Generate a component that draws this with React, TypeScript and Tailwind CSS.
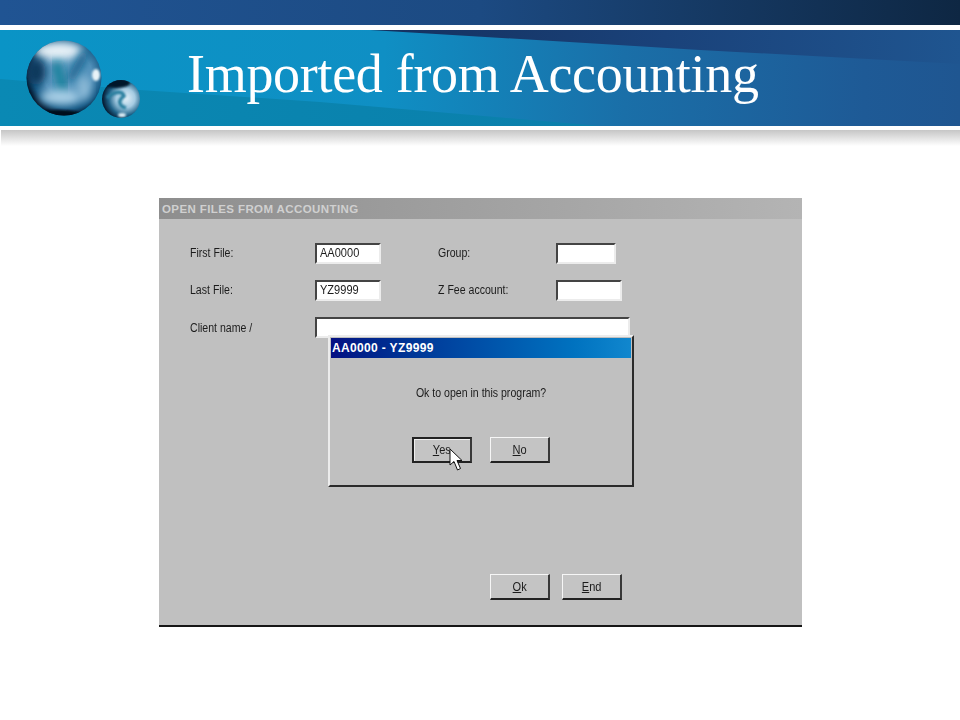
const squeeze = "inline-block whitespace-nowrap origin-left scale-x-[0.88]";

function Field({ width, value }: { width: string; value?: string }) {
  return (
    <div className={`${width} h-[21px] bg-white border-t-2 border-l-2 border-t-[#444444] border-l-[#444444] border-b-2 border-r-2 border-b-[#ececec] border-r-[#ececec] pl-[3px] text-[12px] leading-[17px] text-[#1c1c1c] overflow-hidden`}>
      {value ? <span className="inline-block whitespace-nowrap origin-left scale-x-[0.92]">{value}</span> : null}
    </div>
  );
}

function Label({ className, children }: { className: string; children: string }) {
  return (
    <span className={className}>
      <span className={squeeze}>{children}</span>
    </span>
  );
}

function Btn({ first, rest, strong }: { first: string; rest: string; strong?: boolean }) {
  return (
    <div
      className={`w-[60px] h-[26px] flex items-center justify-center bg-[#c4c4c4] text-[12px] text-[#1c1c1c] border-b-2 border-r-2 border-b-[#222222] border-r-[#383838] ${
        strong
          ? "border-t-2 border-l-2 border-t-[#222222] border-l-[#222222] shadow-[inset_1px_1px_0_#efefef]"
          : "border-t border-l border-t-[#f6f6f6] border-l-[#f6f6f6]"
      }`}
    >
      <span className="inline-block scale-x-[0.92]">
        <span className="underline">{first}</span>
        {rest}
      </span>
    </div>
  );
}

function Banner() {
  return (
    <svg className="absolute inset-0" width="960" height="96" viewBox="0 0 960 96">
      <defs>
        <linearGradient id="base" x1="0" x2="1" y1="0" y2="0">
          <stop offset="0" stopColor="#0a94c6" />
          <stop offset="0.4" stopColor="#0f8fc4" />
          <stop offset="0.65" stopColor="#1a6fa8" />
          <stop offset="0.9" stopColor="#1e5a96" />
          <stop offset="1" stopColor="#1f5691" />
        </linearGradient>
        <linearGradient id="wedge" x1="0" x2="1" y1="0" y2="0">
          <stop offset="0" stopColor="#14305e" />
          <stop offset="0.5" stopColor="#1a427a" />
          <stop offset="1" stopColor="#1f5590" />
        </linearGradient>
        <linearGradient id="band" x1="0" x2="1" y1="0" y2="0">
          <stop offset="0" stopColor="#0a89b4" />
          <stop offset="0.6" stopColor="#0a83ae" />
          <stop offset="1" stopColor="#0b7fab" />
        </linearGradient>
        <radialGradient id="big" cx="0.55" cy="0.45" r="0.58">
          <stop offset="0" stopColor="#5f9cc2" />
          <stop offset="0.55" stopColor="#5493bc" />
          <stop offset="0.8" stopColor="#175a86" />
          <stop offset="0.93" stopColor="#06243f" />
          <stop offset="1" stopColor="#020c1c" />
        </radialGradient>
        <radialGradient id="small" cx="0.62" cy="0.48" r="0.62">
          <stop offset="0" stopColor="#e4f0f8" />
          <stop offset="0.4" stopColor="#a5cbe2" />
          <stop offset="0.72" stopColor="#1f6288" />
          <stop offset="1" stopColor="#03142a" />
        </radialGradient>
        <filter id="soft" x="-50%" y="-50%" width="200%" height="200%">
          <feGaussianBlur stdDeviation="4" />
        </filter>
        <filter id="soft1" x="-50%" y="-50%" width="200%" height="200%">
          <feGaussianBlur stdDeviation="1.3" />
        </filter>
        <clipPath id="bigClip">
          <circle cx="64" cy="48" r="37.5" />
        </clipPath>
        <clipPath id="smallClip">
          <circle cx="121" cy="69" r="19" />
        </clipPath>
      </defs>
      <rect width="960" height="96" fill="url(#base)" />
      <polygon points="0,49 140,60 320,72 600,96 0,96" fill="url(#band)" />
      <polygon points="370,0 960,0 960,34 700,20" fill="url(#wedge)" />
      <circle cx="64" cy="48" r="37.5" fill="url(#big)" />
      <g clipPath="url(#bigClip)">
        <ellipse cx="58" cy="21" rx="24" ry="9" fill="#e6f0f6" filter="url(#soft)" />
        <ellipse cx="36" cy="42" rx="10" ry="13" fill="#08385c" filter="url(#soft)" />
        <path d="M56 32 L64 62" stroke="#127f98" strokeWidth="9" filter="url(#soft)" />
        <path d="M86 22 L70 50" stroke="#0d5a86" strokeWidth="7" filter="url(#soft)" />
        <ellipse cx="60" cy="67" rx="20" ry="7" fill="#a9cfe6" filter="url(#soft)" />
        <ellipse cx="84" cy="58" rx="6" ry="12" fill="#8fbcd8" filter="url(#soft)" />
        <ellipse cx="96" cy="45" rx="4" ry="6" fill="#e8f3f8" filter="url(#soft1)" />
        <ellipse cx="58" cy="86" rx="26" ry="6" fill="#020c1c" filter="url(#soft1)" />
      </g>
      <circle cx="121" cy="69" r="19" fill="url(#small)" />
      <g clipPath="url(#smallClip)">
        <ellipse cx="116" cy="53" rx="14" ry="5" fill="#04182c" filter="url(#soft1)" />
        <path d="M107 68 C113 62 122 60 124 66 C118 70 118 76 126 78" fill="none" stroke="#2a7f9f" strokeWidth="3.5" filter="url(#soft1)" />
        <ellipse cx="122" cy="85" rx="4" ry="2" fill="#e6f3fa" filter="url(#soft1)" />
      </g>
    </svg>
  );
}

export default function App() {
  return (
    <div className="w-[960px] h-[720px] bg-white overflow-hidden flex flex-col" style={{ fontFamily: '"Liberation Sans", Arial, sans-serif' }}>
      <div className="h-[25px] shrink-0 bg-gradient-to-r from-[#205493] via-[#1c4a82] to-[#0e2743]" />
      <div className="relative h-[96px] mt-[5px] shrink-0">
        <Banner />
        <h1
          className="relative pl-[187px] text-[54px] leading-[88px] tracking-[-0.3px] text-white whitespace-nowrap"
          style={{ fontFamily: '"Liberation Serif", "Times New Roman", serif' }}
        >
          Imported from Accounting
        </h1>
      </div>
      <div className="h-[16px] mt-[4px] ml-[1px] shrink-0 bg-gradient-to-b from-[#c6c6c6] to-white" />

      <div className="relative ml-[159px] mt-[52px] w-[643px] h-[429px] shrink-0 bg-[#c0c0c0] border-b-2 border-b-[#161616] flex flex-col">
        <div className="h-[21px] shrink-0 pl-[3px] bg-gradient-to-r from-[#8e8e8e] to-[#b4b4b4] text-[11.5px] font-bold leading-[22px] tracking-[0.4px] text-[#d0d0d0]">
          OPEN FILES FROM ACCOUNTING
        </div>

        <div className="pl-[31px] pt-[24px] flex flex-col gap-[16px] text-[12px] text-[#1c1c1c]">
          <div className="flex items-center h-[21px]">
            <Label className="w-[125px] -mt-[1px]">First File:</Label>
            <Field width="w-[66px]" value="AA0000" />
            <Label className="ml-[57px] w-[118px] -mt-[1px]">Group:</Label>
            <Field width="w-[60px]" />
          </div>
          <div className="flex items-center h-[21px]">
            <Label className="w-[125px] -mt-[1px]">Last File:</Label>
            <Field width="w-[66px]" value="YZ9999" />
            <Label className="ml-[57px] w-[118px] -mt-[1px]">Z Fee account:</Label>
            <Field width="w-[66px]" />
          </div>
          <div className="flex items-center h-[21px]">
            <Label className="w-[125px] mt-[1px]">Client name /</Label>
            <Field width="w-[315px]" />
          </div>
        </div>

        <div className="flex-1" />
        <div className="flex justify-end gap-[12px] pr-[180px] pb-[25px]">
          <Btn first="O" rest="k" />
          <Btn first="E" rest="nd" />
        </div>

        <div className="absolute left-[169px] top-[137px] w-[306px] h-[152px] bg-[#c0c0c0] border-t-2 border-l-2 border-t-[#ececec] border-l-[#ececec] border-b-2 border-r-2 border-b-[#2a2a2a] border-r-[#2a2a2a] flex flex-col p-[1px]">
          <div className="h-[20px] shrink-0 pl-[1px] bg-gradient-to-r from-[#050f82] to-[#1187ce] text-white text-[12px] font-bold leading-[20px] tracking-[0.35px]">
            AA0000 - YZ9999
          </div>
          <div className="text-center text-[12px] text-[#1c1c1c] mt-[26px]">
            <span className="inline-block whitespace-nowrap scale-x-[0.88]">Ok to open in this program?</span>
          </div>
          <div className="flex justify-center gap-[18px] mt-[35px]">
            <Btn first="Y" rest="es" strong />
            <Btn first="N" rest="o" />
          </div>
        </div>

        <svg className="absolute left-[290px] top-[250px]" width="14" height="24" viewBox="0 0 14 24">
          <path d="M1 1 L1 17 L5 13.5 L8.5 22 L11.5 20.5 L8 12.5 L13 12.5 Z" fill="#ffffff" stroke="#111111" strokeWidth="1" strokeLinejoin="miter" />
        </svg>
      </div>
    </div>
  );
}
